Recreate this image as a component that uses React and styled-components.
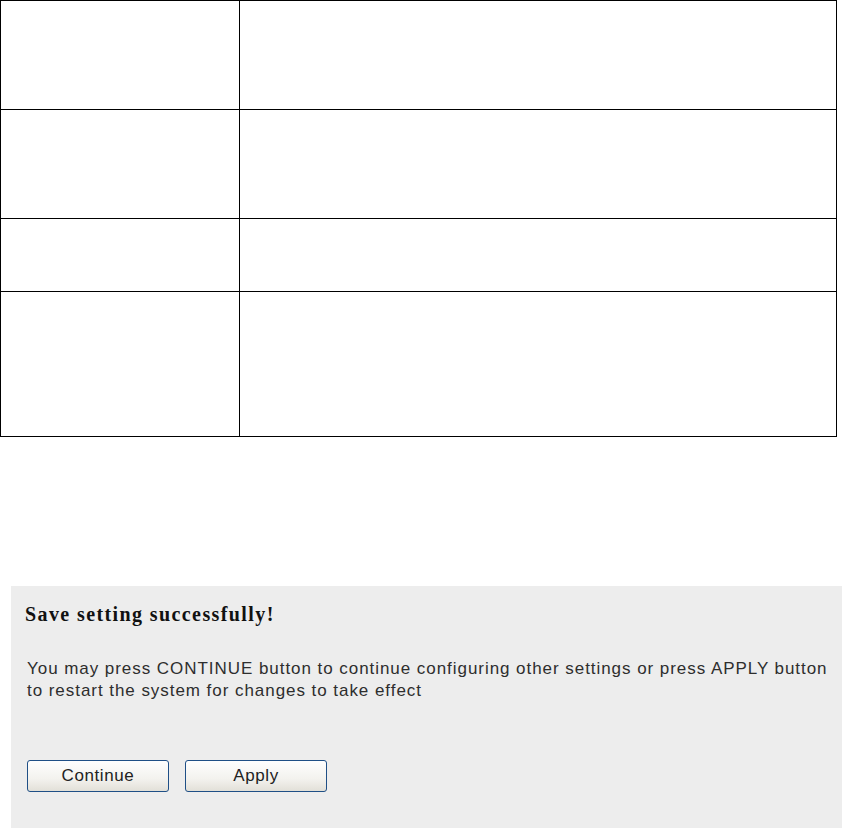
import React from 'react'
import styled, { createGlobalStyle } from 'styled-components'

const GlobalStyle = createGlobalStyle`
  html, body {
    margin: 0;
    padding: 0;
    background: #ffffff;
  }
`

const rows = [109, 109, 73, 145]

const App = () => {
  return (
    <Page>
      <GlobalStyle />
      <Grid>
        <tbody>
          {rows.map((h, i) => (
            <Row key={i} $height={h}>
              <LabelCell />
              <ValueCell />
            </Row>
          ))}
        </tbody>
      </Grid>

      <Panel>
        <Title>Save setting successfully!</Title>
        <Message>
          You may press CONTINUE button to continue configuring other settings or press APPLY button
          to restart the system for changes to take effect
        </Message>
        <Buttons>
          <Button>Continue</Button>
          <Button>Apply</Button>
        </Buttons>
      </Panel>
    </Page>
  )
}

export default App

const Page = styled.div`
  width: 842px;
  height: 828px;
  display: flex;
  flex-direction: column;
  overflow: hidden;
`

const Grid = styled.table`
  width: 837px;
  border-collapse: collapse;
  border: 1px solid #000;
  table-layout: fixed;
`

const Row = styled.tr`
  height: ${(p) => p.$height}px;
`

const LabelCell = styled.td`
  width: 238px;
  border: 1px solid #000;
  padding: 0;
`

const ValueCell = styled.td`
  border: 1px solid #000;
  padding: 0;
`

const Panel = styled.div`
  margin-top: 149px;
  margin-left: 11px;
  flex: 1;
  background: #ededed;
  padding: 16px 0 0 14px;
  display: flex;
  flex-direction: column;
`

const Title = styled.div`
  font-family: "Liberation Serif", serif;
  font-weight: bold;
  font-size: 20px;
  letter-spacing: 1.4px;
  color: #111;
  line-height: 24px;
`

const Message = styled.p`
  margin: 32px 0 0 2px;
  font-family: "Liberation Sans", Arial, sans-serif;
  font-size: 17px;
  letter-spacing: 0.95px;
  line-height: 22px;
  color: #2e2e2e;
  width: 815px;
`

const Buttons = styled.div`
  display: flex;
  gap: 16px;
  margin: 58px 0 0 2px;
`

const Button = styled.button`
  width: 142px;
  height: 32px;
  border: 1px solid #1f4f86;
  border-radius: 3px;
  background: linear-gradient(#fefefe, #f3f2ee 60%, #e2e0d8);
  font-family: "Liberation Sans", Arial, sans-serif;
  font-size: 17px;
  letter-spacing: 0.6px;
  color: #222;
  padding: 0;
`
